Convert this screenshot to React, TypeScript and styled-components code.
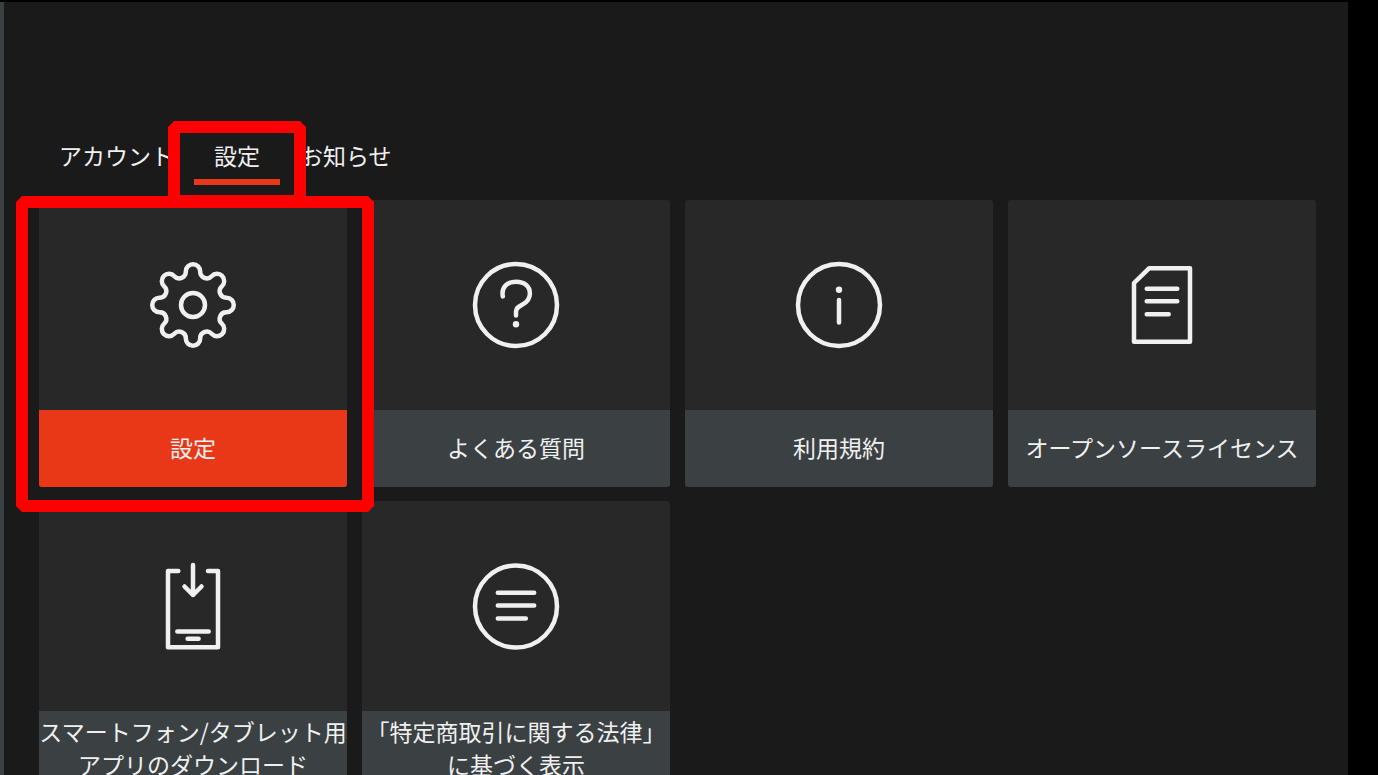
import React, { useState } from 'react';
import styled, { createGlobalStyle } from 'styled-components';

const GlobalStyle = createGlobalStyle`
  *, *::before, *::after { box-sizing: border-box; }
  body {
    margin: 0;
    background: #000;
    font-family: 'Noto Sans CJK JP', 'Noto Sans', sans-serif;
  }
`;

const Screen = styled.div`
  height: 100vh;
  overflow: hidden;
  padding: 2px 30px 0 0;
  display: flex;
`;

const SideRail = styled.aside`
  flex: 0 0 4px;
  background: #3b4043;
`;

const Main = styled.main`
  flex: 1;
  min-width: 0;
  padding: 137px 32px 0 35px;
  background: #1a1a1a;
`;

const Tabs = styled.nav`
  display: flex;
  margin-bottom: 15px;
`;

const Tab = styled.button<{ $active: boolean }>`
  position: relative;
  padding: 0 20px 8px;
  border: 0;
  border-bottom: 6px solid ${(p) => (p.$active ? '#e83817' : 'transparent')};
  background-color: transparent;
  background-clip: padding-box;
  color: #f0f0f0;
  font: inherit;
  font-size: 23px;
  line-height: 32px;
  white-space: nowrap;
  cursor: pointer;
`;

const Grid = styled.div`
  display: grid;
  grid-template-columns: repeat(4, minmax(0, 1fr));
  gap: 14px 15px;
`;

const Card = styled.button`
  position: relative;
  display: flex;
  flex-direction: column;
  padding: 0;
  border: 0;
  border-radius: 3px;
  background: #282828;
  color: #f0f0f0;
  font: inherit;
  font-size: 23px;
  line-height: 33px;
  cursor: pointer;
`;

const CardIcon = styled.span`
  display: flex;
  align-items: center;
  justify-content: center;
  width: 100%;
  height: 210px;
`;

const CardLabel = styled.span<{ $active: boolean }>`
  display: flex;
  align-items: center;
  justify-content: center;
  width: 100%;
  height: 77px;
  padding-bottom: 3px;
  border-radius: 0 0 3px 3px;
  background: ${(p) => (p.$active ? '#e83817' : '#3b4043')};
  text-align: center;
  white-space: pre;
`;

const Highlight = styled.span<{ $inset: string }>`
  position: absolute;
  z-index: 2;
  inset: ${(p) => p.$inset};
  border: 12px solid #f00;
  clip-path: polygon(
    6px 0, calc(100% - 6px) 0, 100% 6px, 100% calc(100% - 6px),
    calc(100% - 6px) 100%, 6px 100%, 0 calc(100% - 6px), 0 6px
  );
  pointer-events: none;
`;

const Glyph = styled.svg`
  width: 90px;
  height: 90px;
  fill: none;
  stroke: #f0f0f0;
  stroke-width: 4.5;
  stroke-linecap: round;
  stroke-linejoin: round;
`;

const Dot = styled.circle`
  fill: #f0f0f0;
  stroke: none;
`;

// Eight round teeth joined by tangent valley arcs.
const gearPath = (() => {
  const point = (deg: number) => {
    const a = (deg * Math.PI) / 180;
    return `${(34.33 * Math.cos(a)).toFixed(2)} ${(34.33 * Math.sin(a)).toFixed(2)}`;
  };
  let d = `M${point(-12.1)}`;
  for (let i = 0; i < 8; i++) {
    d += `A7.2 7.2 0 1 1 ${point(i * 45 + 12.1)}`;
    d += `A6.6 6.6 0 0 0 ${point(i * 45 + 32.9)}`;
  }
  return `${d}Z`;
})();

const icons = {
  gear: (
    <>
      <path d={gearPath} />
      <circle r="12" />
    </>
  ),
  question: (
    <>
      <circle r="41" />
      <path d="M-13.2-8.6C-14.8-18-9-23.2 0-23.2C8.7-23.2 13.9-18.5 13.9-11.6C13.9-6 11-3 6.5-.6C2 1.8 0 3.2 0 6.5V10.5" />
      <Dot cy="19.3" r="3.2" />
    </>
  ),
  info: (
    <>
      <circle r="41" />
      <Dot cy="-15.3" r="3.2" />
      <path d="M0-5V17.5" />
    </>
  ),
  document: (
    <path d="M-13-36.7H28V36.7H-28V-22ZM-15.3-16.3H15.3M-15.3-3.7H15.3M-15.3 9.3H6.7" />
  ),
  download: (
    <path d="M-14.7-35H-25V41.3H25V-35H15M0-41V-11M-8.5-19.5L0-11L8.5-19.5M-15.7 25.4H15.7M-5.4 32.7H5.6" />
  ),
  text: (
    <>
      <circle cy=".5" r="41" />
      <path d="M-18.2-13.3H18.2M-18.2-.4H18.2M-18.2 12.5H9.8" />
    </>
  ),
};

const tabs = ['アカウント', '設定', 'お知らせ'];

const items: { icon: keyof typeof icons; label: string }[] = [
  { icon: 'gear', label: '設定' },
  { icon: 'question', label: 'よくある質問' },
  { icon: 'info', label: '利用規約' },
  { icon: 'document', label: 'オープンソースライセンス' },
  { icon: 'download', label: 'スマートフォン/タブレット用\nアプリのダウンロード' },
  { icon: 'text', label: '「特定商取引に関する法律」\nに基づく表示' },
];

export default function App() {
  const [tab, setTab] = useState(1);
  const [selected, setSelected] = useState(0);

  return (
    <>
      <GlobalStyle />
      <Screen lang="ja">
        <SideRail />
        <Main>
          <Tabs>
            {tabs.map((name, i) => (
              <Tab key={name} $active={i === tab} onClick={() => setTab(i)}>
                {name}
                {i === tab && <Highlight $inset="-18px -26px -28px" />}
              </Tab>
            ))}
          </Tabs>
          <Grid>
            {items.map(({ icon, label }, i) => (
              <Card key={icon} onClick={() => setSelected(i)}>
                <CardIcon>
                  <Glyph viewBox="-45 -45 90 90" aria-hidden="true">
                    {icons[icon]}
                  </Glyph>
                </CardIcon>
                <CardLabel $active={i === selected}>{label}</CardLabel>
                {i === selected && <Highlight $inset="-4px -27px -25px -23px" />}
              </Card>
            ))}
          </Grid>
        </Main>
      </Screen>
    </>
  );
}
